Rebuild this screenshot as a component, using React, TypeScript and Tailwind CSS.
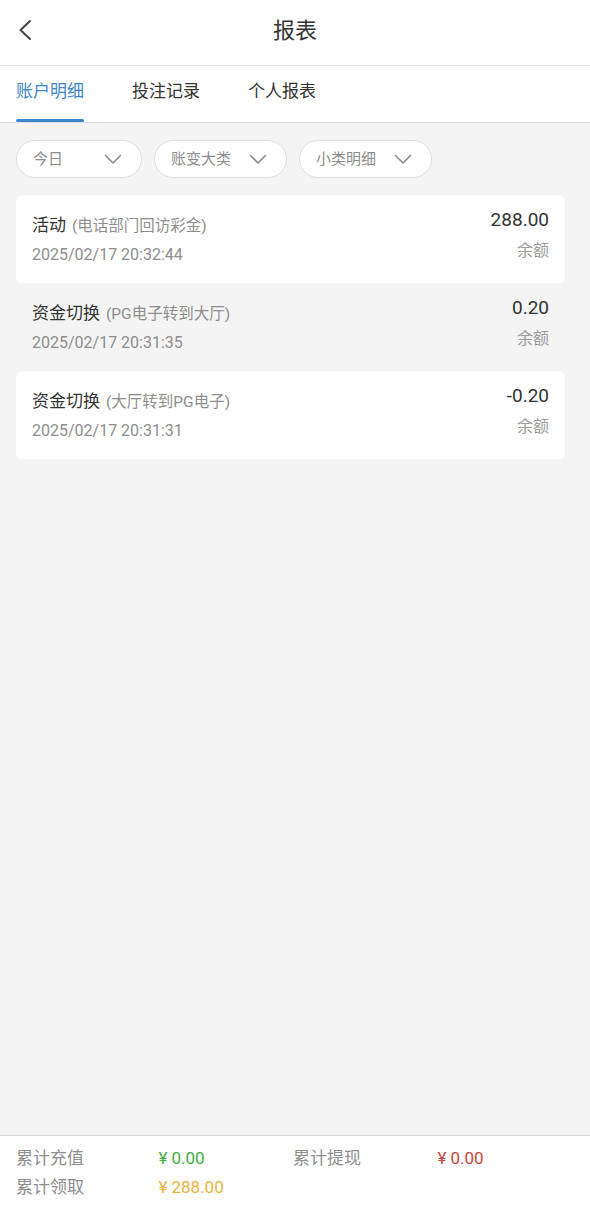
import React from 'react';

const font = "font-['Roboto','Noto_Sans_CJK_SC',sans-serif]";

const records = [
  { title: '活动', note: '(电话部门回访彩金)', time: '2025/02/17 20:32:44', amount: '288.00', white: true },
  { title: '资金切换', note: '(PG电子转到大厅)', time: '2025/02/17 20:31:35', amount: '0.20', white: false },
  { title: '资金切换', note: '(大厅转到PG电子)', time: '2025/02/17 20:31:31', amount: '-0.20', white: true },
];

function Chevron() {
  return (
    <svg width="18" height="11" viewBox="0 0 18 11" fill="none" className="text-[#8a8a8a]">
      <path d="M1.5 1.5 L9 9 L16.5 1.5" stroke="currentColor" strokeWidth="1.6" strokeLinecap="round" strokeLinejoin="round" />
    </svg>
  );
}

function Filter({ label, width }: { label: string; width: string }) {
  return (
    <div className={`flex h-[38px] items-center justify-between rounded-full border border-[#dedede] bg-white pl-4 pr-[19px] ${width}`}>
      <span className="text-[15px] text-[#8c8c8c]">{label}</span>
      <Chevron />
    </div>
  );
}

function Money({ value, color }: { value: string; color: string }) {
  return (
    <span className={`pl-[3px] ${color}`}>
      <span className="mr-[4px]">¥</span>
      {value}
    </span>
  );
}

export default function App() {
  return (
    <div className={`${font} flex h-[1212px] w-[590px] flex-col bg-[#f4f4f5]`}>
      <header className="relative flex h-[66px] shrink-0 items-center justify-center border-b border-[#e2e2e2] bg-white">
        <svg className="absolute left-[17px] top-[19px]" width="16" height="22" viewBox="0 0 16 22" fill="none">
          <path d="M13 2 L3.5 11 L13 20" stroke="#444" strokeWidth="2" strokeLinecap="round" strokeLinejoin="round" />
        </svg>
        <h1 className="text-[22px] text-[#333] pb-1">报表</h1>
      </header>

      <nav className="flex h-[57px] shrink-0 items-stretch border-b border-[#e0e0e0] bg-white pl-4">
        <div className="relative flex items-center pb-1 text-[17px] text-[#3d86cf]">
          账户明细
          <span className="absolute bottom-0 left-0 right-0 h-[3px] rounded-full bg-[#3d86cf]" />
        </div>
        <div className="ml-[48px] flex items-center pb-1 text-[17px] text-[#333]">投注记录</div>
        <div className="ml-[48px] flex items-center pb-1 text-[17px] text-[#333]">个人报表</div>
      </nav>

      <div className="flex gap-3 px-4 pt-[17px]">
        <Filter label="今日" width="w-[126px]" />
        <Filter label="账变大类" width="w-[133px]" />
        <Filter label="小类明细" width="w-[133px]" />
      </div>

      <div className="flex flex-col pl-4 pr-[25px] pt-[17px]">
        {records.map((r, i) => (
          <div
            key={i}
            className={`flex h-[88px] items-start justify-between rounded-md px-4 pt-[18px] ${r.white ? 'bg-white' : 'bg-transparent'}`}
          >
            <div className="flex flex-col">
              <div className="flex items-baseline">
                <span className="text-[17px] text-[#333]">{r.title}</span>
                <span className="ml-[6px] text-[15.5px] text-[#8e8e8e]">{r.note}</span>
              </div>
              <span className="mt-[4px] text-[16px] text-[#8e8e8e]">{r.time}</span>
            </div>
            <div className="flex flex-col items-end">
              <span className="-mt-[5px] text-[19px] leading-[24px] text-[#333]">{r.amount}</span>
              <span className="mt-[7px] text-[16px] text-[#9a9a9a]">余额</span>
            </div>
          </div>
        ))}
      </div>

      <div className="flex-1" />

      <footer className="grid h-[77px] shrink-0 grid-cols-4 content-start gap-y-[6px] border-t border-[#dcdcdc] bg-white px-4 pt-[11px] text-[17px] leading-[23px]">
        <span className="text-[#8e8e8e]">累计充值</span>
        <Money value="0.00" color="text-[#3fae3f]" />
        <span className="-ml-[2px] text-[#8e8e8e]">累计提现</span>
        <Money value="0.00" color="text-[#c9453b]" />
        <span className="text-[#8e8e8e]">累计领取</span>
        <Money value="288.00" color="text-[#eeb13a]" />
      </footer>
    </div>
  );
}
